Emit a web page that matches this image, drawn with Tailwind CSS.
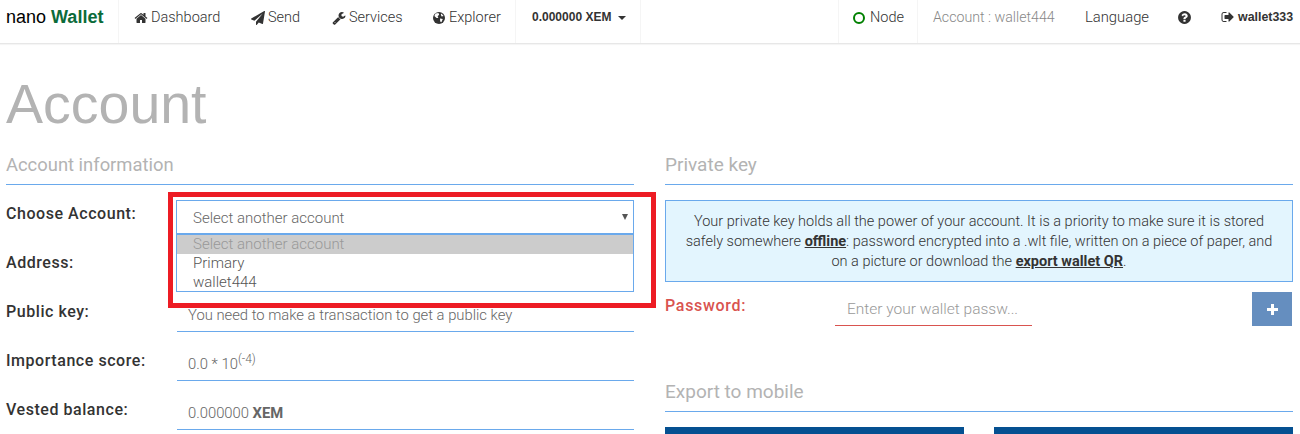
<!DOCTYPE html>
<html lang="en">
<head>
    <meta charset="UTF-8">
    <title>Account</title>
    <script src="https://cdn.jsdelivr.net/npm/@tailwindcss/browser@4"></script>
</head>
<body class="bg-white h-[434px] overflow-hidden font-['Roboto',sans-serif] font-light text-[14.5px] text-[#333]">
    <!-- Top nav -->
    <nav class="flex justify-between h-[44px] border-b border-[#e7e7e7] shadow-[0_1px_1px_rgba(0,0,0,0.04)]">
        <div class="flex h-[43px]">
            <a class="w-[119px] pl-[6px] leading-[34px] text-[18px] font-['Liberation_Sans',sans-serif] font-normal text-black border-r border-[#f5f5f5]">nano <b class="text-[#0b6b3a]">Wallet</b></a>
            <a class="flex items-center gap-[3px] pl-[15px] w-[117px] pb-[8px]">
                <svg class="w-[14px] h-[14px]" viewBox="0 0 1792 1792" fill="#333"><path d="M1472 992v480q0 26-19 45t-45 19h-384v-384h-256v384h-384q-26 0-45-19t-19-45v-480q0-1 .5-3t.5-3l575-474 575 474q1 2 1 6zm223-69l-62 74q-8 9-21 11h-3q-13 0-21-7l-692-577-692 577q-12 8-24 7-13-2-21-11l-62-74q-8-10-7-23.500t11-21.500l719-599q32-26 76-26t76 26l244 204v-195q0-14 9-23t23-9h192q14 0 23 9t9 23v408l219 182q10 8 11 21.500t-7 23.500z"/></svg>
                Dashboard
            </a>
            <a class="flex items-center gap-[3px] pl-[15px] w-[81px] pb-[8px]">
                <svg class="w-[14px] h-[14px]" viewBox="0 0 1792 1792" fill="#333"><path d="M1764 11q33 24 27 64l-256 1536q-5 29-32 45-14 8-31 8-11 0-24-5l-453-185-242 295q-18 23-49 23-13 0-22-4-19-7-30.500-23.500t-11.500-36.500v-349l864-1059-1069 925-395-162q-37-14-40-55-2-40 32-59l1664-960q15-9 32-9 20 0 36 11z"/></svg>
                Send
            </a>
            <a class="flex items-center gap-[3px] pl-[15px] w-[101px] pb-[8px]">
                <svg class="w-[14px] h-[14px]" viewBox="0 0 1792 1792" fill="#333"><path d="M448 1472q0-26-19-45t-45-19-45 19-19 45 19 45 45 19 45-19 19-45zm644-420l-682 682q-37 37-90 37-52 0-91-37l-106-108q-38-36-38-90 0-53 38-91l681-681q39 98 114.500 173.500t173.500 114.500zm634-435q0 39-23 106-47 134-164.500 217.500t-258.500 83.500q-185 0-316.500-131.500t-131.500-316.500 131.500-316.500 316.500-131.500q58 0 121.500 16.500t107.500 46.500q16 11 16 28t-16 28l-293 169v224l193 107q5-3 79-48.500t135.500-81 70.500-35.500q15 0 23.500 10t8.500 25z"/></svg>
                Services
            </a>
            <a class="flex items-center gap-[3px] pl-[14px] w-[98px] pb-[8px] border-r border-[#f5f5f5]">
                <svg class="w-[14px] h-[14px]" viewBox="0 0 14 14"><circle cx="7" cy="7" r="6" fill="#333"/><path d="M3.5 2.6 L6.4 2 L7.2 3.6 L5.6 5.4 L6.4 7 L4.6 7 L2.4 5Z M8 7.4 L10.8 8 L9.4 11.2 L8.2 10.6Z M9.4 2.6 L11.6 5 L9.6 5.4 L8.8 3.6Z" fill="#fff"/></svg>
                Explorer
            </a>
            <a class="flex items-center pl-[16px] w-[125px] pb-[9px] border-r border-[#f5f5f5] text-[12px] font-bold font-['Liberation_Sans',sans-serif]">
                0.000000 XEM
                <span class="ml-[7px] mt-[2px] border-x-[4px] border-x-transparent border-t-[4px] border-t-[#333]"></span>
            </a>
        </div>
        <div class="flex h-[43px]">
            <a class="flex items-center gap-[5px] pl-[14px] w-[80px] pb-[8px] border-x border-[#f5f5f5]">
                <span class="w-[12px] h-[12px] rounded-full border-2 border-[#008000]"></span>
                Node
            </a>
            <span class="flex items-center w-[152px] pl-[15px] pb-[8px] text-[14.2px] text-[#888]">Account : wallet444</span>
            <a class="flex items-center w-[94px] pl-[15px] pb-[9px] text-[14.8px]">Language</a>
            <a class="flex items-center w-[57px] pl-[13px] pb-[9px]">
                <svg class="w-[15px] h-[15px]" viewBox="0 0 1792 1792" fill="#333"><path d="M1024 1376v-192q0-14-9-23t-23-9h-192q-14 0-23 9t-9 23v192q0 14 9 23t23 9h192q14 0 23-9t9-23zm256-672q0-88-55.500-163t-138.500-116-170-41q-243 0-371 213-15 24 8 42l132 100q7 6 19 6 16 0 25-12 53-68 86-92 34-24 86-24 48 0 85.500 26t37.500 59q0 38-20 61t-68 45q-63 28-115.500 86.500t-52.500 125.500v36q0 14 9 23t23 9h192q14 0 23-9t9-23q0-19 21.500-49.500t54.500-49.500q32-18 49-28.500t46-35 44.500-48 28-60.500 12.500-81zm384 192q0 209-103 385.500t-279.500 279.500-385.500 103-385.500-103-279.500-279.500-103-385.500 103-385.500 279.500-279.500 385.500-103 385.500 103 279.500 279.500 103 385.500z"/></svg>
            </a>
            <a class="flex items-center gap-[3px] w-[79px] pb-[9px] text-[12.4px] font-bold font-['Liberation_Sans',sans-serif]">
                <svg class="w-[14px] h-[14px]" viewBox="0 0 1792 1792" fill="#333"><path d="M704 1440q0 4 1 20t.5 26.500-3 23.500-10 19.500-20.500 6.500h-320q-119 0-203.500-84.500t-84.500-203.500v-704q0-119 84.500-203.500t203.500-84.500h320q13 0 22.500 9.500t9.500 22.500q0 4 1 20t.5 26.500-3 23.500-10 19.500-20.500 6.500h-320q-66 0-113 47t-47 113v704q0 66 47 113t113 47h312l11.500 1 11.500 3 8 5.500 7 9 2 13.500zm928-544q0 26-19 45l-544 544q-19 19-45 19t-45-19-19-45v-288h-448q-26 0-45-19t-19-45v-384q0-26 19-45t45-19h448v-288q0-26 19-45t45-19 45 19l544 544q19 19 19 45z"/></svg>
                wallet333
            </a>
        </div>
    </nav>

    <main class="px-[6px]">
        <h1 class="text-[55.5px] leading-[66px] mt-[27px] text-[#b3b3b3] font-normal font-['Liberation_Sans',sans-serif]">Account</h1>

        <div class="flex gap-[31px] mt-[15px]">
            <!-- Left column -->
            <section class="w-[628px]">
                <h2 class="text-[18.4px] leading-[26px] pb-[6px] text-[#b3b3b3] font-normal border-b border-[#6aa9ec]">Account information</h2>

                <div class="relative mt-[15px] flex flex-col gap-[22px] text-[14.8px]">
                    <div class="flex h-[27px]">
                        <label class="w-[171px] font-medium text-[16px] tracking-[0.55px] leading-[28px]">Choose Account:</label>
                    </div>
                    <div class="flex h-[27px]">
                        <label class="w-[171px] font-medium text-[16px] tracking-[0.55px] leading-[28px]">Address:</label>
                    </div>
                    <div class="flex h-[27px]">
                        <label class="w-[171px] font-medium text-[16px] tracking-[0.55px] leading-[28px]">Public key:</label>
                        <div class="w-[457px] h-[32px] mt-[2px] pl-[11px] pt-[5px] leading-[20px] text-[#666] border-b border-[#6aa9ec]">You need to make a transaction to get a public key</div>
                    </div>
                    <div class="flex h-[27px]">
                        <label class="w-[171px] font-medium text-[16px] tracking-[0.55px] leading-[28px]">Importance score:</label>
                        <div class="w-[457px] h-[32px] mt-[2px] pl-[11px] pt-[5px] leading-[20px] text-[#666] border-b border-[#6aa9ec]">0.0 * 10<sup class="text-[12px]">(-4)</sup></div>
                    </div>
                    <div class="flex h-[27px]">
                        <label class="w-[171px] font-medium text-[16px] tracking-[0.55px] leading-[28px]">Vested balance:</label>
                        <div class="w-[457px] h-[32px] mt-[2px] pl-[11px] pt-[5px] leading-[20px] text-[#666] border-b border-[#6aa9ec]">0.000000 <b class="font-bold">XEM</b></div>
                    </div>

                    <!-- Open dropdown with the red annotation box -->
                    <div class="absolute left-[162px] -top-[8px] w-[488px] h-[116px] border-[5px] border-[#ed1c24] pt-[3px] pl-[3px]">
                        <div class="w-[458px] border border-[#6aa9ec] bg-white">
                            <div class="relative h-[32px] pl-[16px] leading-[34px] text-[15px] text-[#666]">Select another account
                                <span class="absolute right-[5px] top-[13px] border-x-[3px] border-x-transparent border-t-[6px] border-t-[#555]"></span>
                            </div>
                            <div class="border-t-2 border-[#6aa9ec] h-[58px] leading-[19px] text-[15px]">
                                <div class="pl-[16px] bg-[#ccc] text-[#999]">Select another account</div>
                                <div class="pl-[16px] text-[#555]">Primary</div>
                                <div class="pl-[16px] text-[#555]">wallet444</div>
                            </div>
                        </div>
                    </div>
                </div>
            </section>

            <!-- Right column -->
            <section class="w-[628px]">
                <h2 class="text-[19px] leading-[26px] pb-[6px] text-[#b3b3b3] font-normal border-b border-[#6aa9ec]">Private key</h2>
                <div class="mt-[15px] h-[82px] border border-[#6aa9ec] bg-[#e3f5fe] text-center leading-[20px] pt-[11px]">
                    Your private key holds all the power of your account. It is a priority to make sure it is stored<br>
                    safely somewhere <u class="font-bold">offline</u>: password encrypted into a .wlt file, written on a piece of paper, and<br>
                    on a picture or download the <u class="font-bold">export wallet QR</u>.
                </div>
                <div class="flex mt-[10px] h-[34px]">
                    <label class="w-[170px] font-medium text-[16px] tracking-[0.7px] leading-[28px] text-[#d9534f]">Password:</label>
                    <div class="w-[197px] pl-[12px] pt-[7px] leading-[20px] text-[15.5px] text-[#999] border-b border-[#d9534f]">Enter your wallet passw...</div>
                    <button class="flex items-center justify-center ml-auto mr-[1px] w-[40px] h-[34px] bg-[#658ebf]">
                        <svg class="w-[11px] h-[11px]" viewBox="0 0 11 11" fill="#fff"><path d="M0 4H4V0H7V4H11V7H7V11H4V7H0Z"/></svg>
                    </button>
                </div>
                <h2 class="text-[19px] leading-[26px] pb-[6px] mt-[53px] text-[#b3b3b3] font-normal border-b border-[#6aa9ec]">Export to mobile</h2>
                <div class="flex gap-[30px] mt-[15px]">
                    <div class="w-[299px] h-[20px] bg-[#055091]"></div>
                    <div class="w-[299px] h-[20px] bg-[#055091]"></div>
                </div>
            </section>
        </div>
    </main>
</body>
</html>
